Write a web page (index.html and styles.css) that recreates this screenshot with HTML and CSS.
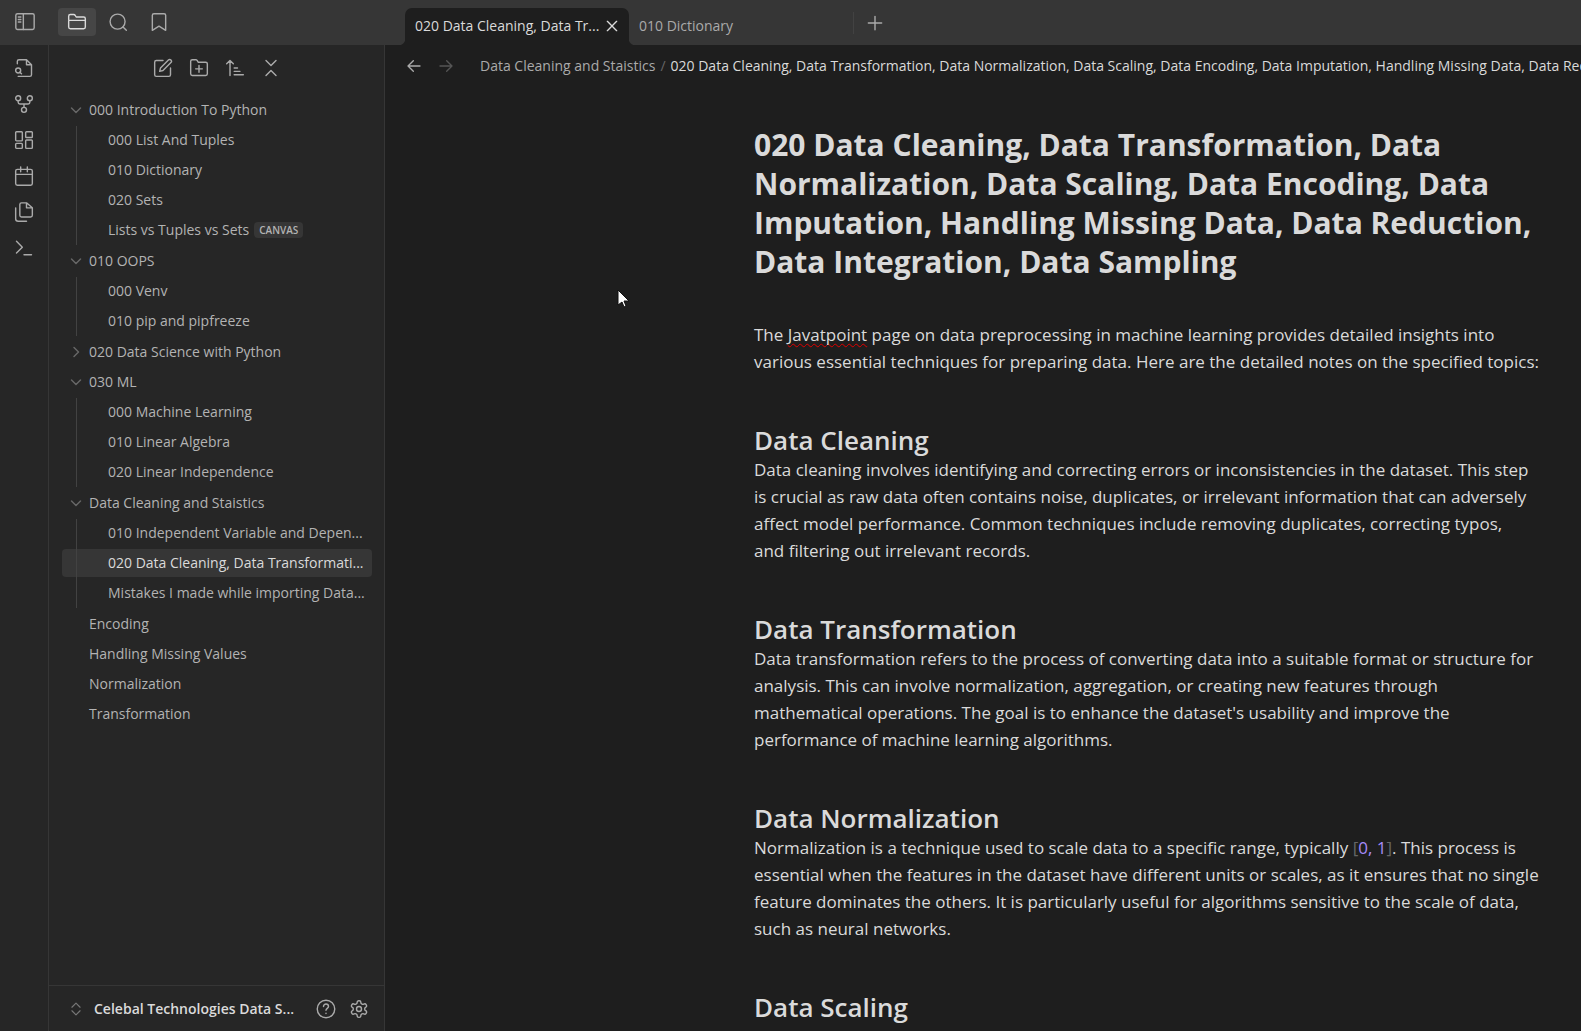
FILE: index.html
```html
<!DOCTYPE html>
<html lang="en">
<head>
<meta charset="utf-8">
<title>020 Data Cleaning</title>
<link rel="stylesheet" href="styles.css">
</head>
<body>
<svg class="sprite" aria-hidden="true">
<symbol id="i-down" viewBox="0 0 24 24"><path d="m3 8 9 9 9-9"/></symbol>
<symbol id="i-right" viewBox="0 0 24 24"><path d="m8 3 9 9-9 9"/></symbol>
</svg>
<div class="app">
  <header class="titlebar">
    <div class="titlebar-left">
      <button class="icon-btn toggle" aria-label="Toggle sidebar"><svg class="icon" viewBox="0 0 24 24"><rect x="1" y="2" width="22" height="19" rx="2"/><path d="M10 2v19M4 6h3M4 9h3M4 12h3"/></svg></button>
      <button class="icon-btn tab-btn selected" aria-label="Files"><svg class="icon" viewBox="0 0 24 24"><path d="M2 9V5a2 2 0 0 1 2-2h4a2 2 0 0 1 1.700.900L11 6h9a2 2 0 0 1 2 2v10a2 2 0 0 1-2 2H4a2 2 0 0 1-2-2V10h20"/></svg></button>
      <button class="icon-btn tab-btn" aria-label="Search"><svg class="icon" viewBox="0 0 24 24"><circle cx="11.500" cy="11.500" r="9"/><path d="m22 22-4-4"/></svg></button>
      <button class="icon-btn tab-btn" aria-label="Bookmarks"><svg class="icon" viewBox="0 0 24 24"><path d="m20 22-8-5-8 5V4a2 2 0 0 1 2-2h12a2 2 0 0 1 2 2z"/></svg></button>
    </div>
    <div class="tabs">
      <div class="tab active"><span class="tab-title">020 Data Cleaning, Data Tr...</span><button class="icon-btn close" aria-label="Close"><svg class="icon small" viewBox="0 0 24 24"><path d="M5 5l14 14M19 5 5 19"/></svg></button></div>
      <div class="tab"><span class="tab-title">010 Dictionary</span></div>
      <button class="icon-btn new-tab" aria-label="New tab"><svg class="icon" viewBox="0 0 24 24"><path d="M12 4v16M4 12h16"/></svg></button>
    </div>
  </header>
  <div class="workspace">
    <nav class="ribbon" aria-label="Ribbon">
      <button class="icon-btn" aria-label="Quick switcher"><svg class="icon" viewBox="0 0 24 24"><path d="M4 7V4a2 2 0 0 1 2-2h9l6 6v12a2 2 0 0 1-2 2H5M15 2v6h6"/><circle cx="5" cy="15" r="3"/><path d="m9 19-2-2"/></svg></button>
      <button class="icon-btn" aria-label="Graph view"><svg class="icon" viewBox="0 0 24 24"><circle cx="12" cy="19" r="3"/><circle cx="5" cy="5" r="3"/><circle cx="19" cy="5" r="3"/><path d="M19 8v2a2 2 0 0 1-2 2H7a2 2 0 0 1-2-2V8M12 12v4"/></svg></button>
      <button class="icon-btn" aria-label="Canvas"><svg class="icon" viewBox="0 0 24 24"><rect x="2" y="2" width="8" height="11" rx="1"/><rect x="14" y="2" width="8" height="7" rx="1"/><rect x="14" y="12" width="8" height="10" rx="1"/><rect x="2" y="16" width="8" height="6" rx="1"/></svg></button>
      <button class="icon-btn" aria-label="Daily note"><svg class="icon" viewBox="0 0 24 24"><rect x="2" y="4" width="20" height="19" rx="2"/><path d="M8 1v6M16 1v6M2 10h20"/></svg></button>
      <button class="icon-btn" aria-label="Templates"><svg class="icon" viewBox="0 0 24 24"><path d="M15 1H9a2 2 0 0 0-2 2v13a2 2 0 0 0 2 2h11a2 2 0 0 0 2-2V7zM15 1v6h7M2 7v13a3 3 0 0 0 3 3h10"/></svg></button>
      <button class="icon-btn" aria-label="Command palette"><svg class="icon" viewBox="0 0 24 24"><path d="m3 18 7-7-7-7M12 20h9"/></svg></button>
    </nav>
    <aside class="sidebar">
      <div class="tools">
        <button class="icon-btn" aria-label="New note"><svg class="icon" viewBox="0 0 24 24"><path d="M12 3H4a2 2 0 0 0-2 2v15a2 2 0 0 0 2 2h15a2 2 0 0 0 2-2v-8"/><path d="M18.500 2.500a2.100 2.100 0 0 1 3 3L12 15l-4 1 1-4z"/></svg></button>
        <button class="icon-btn" aria-label="New folder"><svg class="icon" viewBox="0 0 24 24"><path d="M4 21a2 2 0 0 1-2-2V4a2 2 0 0 1 2-2h4a2 2 0 0 1 1.700.900L11 5h9a2 2 0 0 1 2 2v12a2 2 0 0 1-2 2zM12 9v8M8 13h8"/></svg></button>
        <button class="icon-btn" aria-label="Sort order"><svg class="icon" viewBox="0 0 24 24"><path d="m2 7 4-4 4 4M6 3v18M11 12h4M11 16h7M11 20h11"/></svg></button>
        <button class="icon-btn" aria-label="Collapse all"><svg class="icon" viewBox="0 0 24 24"><path d="m6 21 6-6 6 6M6 3l6 6 6-6"/></svg></button>
      </div>
      <div class="tree">
        <a class="row" href="#"><svg class="icon chev"><use href="#i-down"/></svg><span class="name">000 Introduction To Python</span></a>
        <div class="children">
          <a class="row" href="#"><span class="name">000 List And Tuples</span></a>
          <a class="row" href="#"><span class="name">010 Dictionary</span></a>
          <a class="row" href="#"><span class="name">020 Sets</span></a>
          <a class="row" href="#"><span class="name">Lists vs Tuples vs Sets</span><span class="tag">CANVAS</span></a>
        </div>
        <a class="row" href="#"><svg class="icon chev"><use href="#i-down"/></svg><span class="name">010 OOPS</span></a>
        <div class="children">
          <a class="row" href="#"><span class="name">000 Venv</span></a>
          <a class="row" href="#"><span class="name">010 pip and pipfreeze</span></a>
        </div>
        <a class="row" href="#"><svg class="icon chev"><use href="#i-right"/></svg><span class="name">020 Data Science with Python</span></a>
        <a class="row" href="#"><svg class="icon chev"><use href="#i-down"/></svg><span class="name">030 ML</span></a>
        <div class="children">
          <a class="row" href="#"><span class="name">000 Machine Learning</span></a>
          <a class="row" href="#"><span class="name">010 Linear Algebra</span></a>
          <a class="row" href="#"><span class="name">020 Linear Independence</span></a>
        </div>
        <a class="row" href="#"><svg class="icon chev"><use href="#i-down"/></svg><span class="name">Data Cleaning and Staistics</span></a>
        <div class="children">
          <a class="row" href="#"><span class="name">010 Independent Variable and Depen...</span></a>
          <a class="row current" href="#"><span class="name">020 Data Cleaning, Data Transformati...</span></a>
          <a class="row" href="#"><span class="name">Mistakes I made while importing Data...</span></a>
        </div>
        <a class="row" href="#"><span class="name">Encoding</span></a>
        <a class="row" href="#"><span class="name">Handling Missing Values</span></a>
        <a class="row" href="#"><span class="name">Normalization</span></a>
        <a class="row" href="#"><span class="name">Transformation</span></a>
      </div>
      <footer class="vault">
        <button class="vault-switch"><svg class="icon vault-icon" viewBox="0 0 24 24"><path d="m5 15 7 7 7-7M5 9l7-7 7 7"/></svg><span>Celebal Technologies Data S...</span></button>
        <button class="icon-btn" aria-label="Help"><svg class="icon" viewBox="0 0 24 24"><circle cx="12" cy="12" r="10.500"/><path d="M9 9a3 3 0 0 1 6 0c0 2-3 2.500-3 4.500M12 17v.500"/></svg></button>
        <button class="icon-btn" aria-label="Settings"><svg class="icon" viewBox="0 0 24 24"><path d="M12.220 2h-.440a2 2 0 0 0-2 2v.180a2 2 0 0 1-1 1.730l-.430.250a2 2 0 0 1-2 0l-.150-.080a2 2 0 0 0-2.730.730l-.220.380a2 2 0 0 0 .730 2.730l.150.100a2 2 0 0 1 1 1.720v.510a2 2 0 0 1-1 1.740l-.150.090a2 2 0 0 0-.730 2.730l.220.380a2 2 0 0 0 2.730.730l.150-.080a2 2 0 0 1 2 0l.430.250a2 2 0 0 1 1 1.730V20a2 2 0 0 0 2 2h.440a2 2 0 0 0 2-2v-.180a2 2 0 0 1 1-1.730l.430-.250a2 2 0 0 1 2 0l.150.080a2 2 0 0 0 2.730-.730l.220-.390a2 2 0 0 0-.730-2.730l-.150-.080a2 2 0 0 1-1-1.740v-.500a2 2 0 0 1 1-1.740l.150-.090a2 2 0 0 0 .730-2.730l-.220-.380a2 2 0 0 0-2.730-.730l-.150.080a2 2 0 0 1-2 0l-.430-.250a2 2 0 0 1-1-1.730V4a2 2 0 0 0-2-2z"/><circle cx="12" cy="12" r="3"/></svg></button>
      </footer>
    </aside>
    <main class="pane">
      <div class="view-header">
        <button class="icon-btn" aria-label="Back"><svg class="icon arrow" viewBox="0 0 24 24"><path d="m11 4-8 8 8 8M3 12h18"/></svg></button>
        <button class="icon-btn" aria-label="Forward" disabled><svg class="icon arrow" viewBox="0 0 24 24"><path d="m13 4 8 8-8 8M21 12H3"/></svg></button>
        <div class="crumbs"><a href="#">Data Cleaning and Staistics</a><span class="sep">/</span><span class="here">020 Data Cleaning, Data Transformation, Data Normalization, Data Scaling, Data Encoding, Data Imputation, Handling Missing Data, Data Reduction, Data Integration, Data Sampling</span></div>
      </div>
      <div class="scroller">
        <article class="note">
          <h1>020 Data Cleaning, Data Transformation, Data<br>Normalization, Data Scaling, Data Encoding, Data<br>Imputation, Handling Missing Data, Data Reduction,<br>Data Integration, Data Sampling</h1>
          <p>The <span class="misspelt">Javatpoint</span> page on data preprocessing in machine learning provides detailed insights into<br>various essential techniques for preparing data. Here are the detailed notes on the specified topics:</p>
          <h2>Data Cleaning</h2>
          <p>Data cleaning involves identifying and correcting errors or inconsistencies in the dataset. This step<br>is crucial as raw data often contains noise, duplicates, or irrelevant information that can adversely<br>affect model performance. Common techniques include removing duplicates, correcting typos,<br>and filtering out irrelevant records.</p>
          <h2>Data Transformation</h2>
          <p>Data transformation refers to the process of converting data into a suitable format or structure for<br>analysis. This can involve normalization, aggregation, or creating new features through<br>mathematical operations. The goal is to enhance the dataset's usability and improve the<br>performance of machine learning algorithms.</p>
          <h2>Data Normalization</h2>
          <p>Normalization is a technique used to scale data to a specific range, typically <span class="bracket">[</span><a href="#">0, 1</a><span class="bracket">]</span>. This process is<br>essential when the features in the dataset have different units or scales, as it ensures that no single<br>feature dominates the others. It is particularly useful for algorithms sensitive to the scale of data,<br>such as neural networks.</p>
          <h2>Data Scaling</h2>
          <p>Data scaling adjusts the range of independent variables to ensure they contribute equally</p>
        </article>
      </div>
    </main>
  </div>
</div>
<svg class="cursor" viewBox="0 0 12 19" aria-hidden="true"><path d="M1 1v15l4-3 2 5 2-1-2-5h5z"/></svg>
</body>
</html>
```
FILE: styles.css
```css
* { box-sizing: border-box; }
body { margin: 0; background: #1e1e1e; color: #dadada; font: 14px/20px "Segoe UI", "Open Sans", "Noto Sans", sans-serif; overflow: hidden; }
button { font: inherit; color: inherit; background: none; border: 0; padding: 0; }
a { color: inherit; text-decoration: none; }
.sprite { display: none; }
.icon { width: 20px; height: 20px; flex: none; fill: none; stroke: currentColor; stroke-width: 1.7; stroke-linecap: round; stroke-linejoin: round; }
.icon.small, .icon.arrow { width: 16px; height: 16px; stroke-width: 2; }
.icon-btn { display: flex; align-items: center; justify-content: center; color: #aaa; }
.app { display: flex; flex-direction: column; height: 100vh; }

.titlebar { display: flex; flex: none; height: 45px; background: #363636; }
.titlebar-left { display: flex; flex: none; align-items: center; width: 385px; padding: 0 0 1px 14px; }
.toggle { width: 22px; margin-right: 22px; }
.tab-btn { width: 38px; height: 28px; margin-right: 3px; border-radius: 4px; }
.tab-btn.selected { background: #464646; color: #dadada; }
.tabs { display: flex; flex: 1; align-items: flex-end; padding-left: 20px; }
.tab { display: flex; align-items: center; justify-content: space-between; width: 224px; height: 37px; padding: 0 9px 2px 10px; color: #aaa; white-space: nowrap; }
.tab.active { position: relative; background: #1e1e1e; color: #dadada; border-radius: 7px 7px 0 0; }
.tab.active::before, .tab.active::after { content: ""; position: absolute; bottom: 0; width: 7px; height: 7px; }
.tab.active::before { right: 100%; background: radial-gradient(circle at 0 0, #363636 7px, #1e1e1e 8px); }
.tab.active::after { left: 100%; background: radial-gradient(circle at 100% 0, #363636 7px, #1e1e1e 8px); }
.close { color: #dadada; }
.new-tab { width: 42px; height: 22px; margin-bottom: 11px; border-left: 1px solid #424242; }

.workspace { display: flex; flex: 1; min-height: 0; }
.ribbon { display: flex; flex: none; flex-direction: column; gap: 16px; width: 49px; padding-top: 13px; background: #262626; border-right: 1px solid #363636; }
.sidebar { display: flex; flex: none; flex-direction: column; width: 336px; background: #262626; border-right: 1px solid #363636; }
.tools { display: flex; justify-content: center; gap: 16px; padding-top: 13px; }
.tree { flex: 1; padding: 18px 12px 0 13px; color: #b3b3b3; }
.row { display: flex; align-items: center; height: 28px; margin-bottom: 2px; padding-left: 8px; border-radius: 4px; white-space: nowrap; }
.chev { width: 12px; height: 12px; color: #666; stroke-width: 3; }
.row > .name:first-child { margin-left: 19px; }
.chev + .name { margin-left: 7px; }
.children { position: relative; padding-bottom: 1px; }
.children::before { content: ""; position: absolute; left: 14px; top: 0; bottom: 2px; width: 1px; background: #424242; }
.children .row { padding-left: 27px; }
.row.current { background: #363636; color: #dadada; }
.tag { margin-left: 5px; padding: 0 5px; border-radius: 4px; background: #363636; font-size: 10px; line-height: 16px; font-weight: 600; }
.vault { display: flex; align-items: center; gap: 13px; height: 46px; padding: 0 15px 0 20px; border-top: 1px solid #363636; }
.vault-switch { display: flex; flex: 1; align-items: center; gap: 11px; font-weight: 600; white-space: nowrap; }
.vault-icon { width: 14px; height: 14px; color: #777; stroke-width: 2; }

.pane { display: flex; flex: 1; flex-direction: column; min-width: 0; background: #1e1e1e; }
.view-header { display: flex; flex: none; align-items: center; gap: 16px; height: 42px; padding-left: 21px; }
.view-header .icon-btn:disabled { color: #555; }
.crumbs { flex: 1; min-width: 0; margin-left: 10px; overflow: hidden; white-space: nowrap; color: #aaa; }
.sep { margin: 0 5px; color: #666; }
.here { color: #dadada; }
.scroller { flex: 1; min-height: 0; overflow: hidden; padding: 38px 44px 0 369px; }
.note { font-size: 17px; line-height: 27px; white-space: nowrap; }
h1 { margin: 0 0 40px; font-size: 30px; line-height: 39px; font-weight: 700; }
h2 { margin: 49px 0 0; font-size: 26px; line-height: 32px; font-weight: 600; }
p { margin: 0; }
.note a { color: #a68af9; }
.bracket { color: #666; }
.misspelt { text-decoration: underline wavy #e00000 1px; text-underline-offset: 2px; text-decoration-skip-ink: none; }
.cursor { position: absolute; left: 617px; top: 289px; width: 12px; height: 19px; fill: #fff; stroke: #111; }
```
